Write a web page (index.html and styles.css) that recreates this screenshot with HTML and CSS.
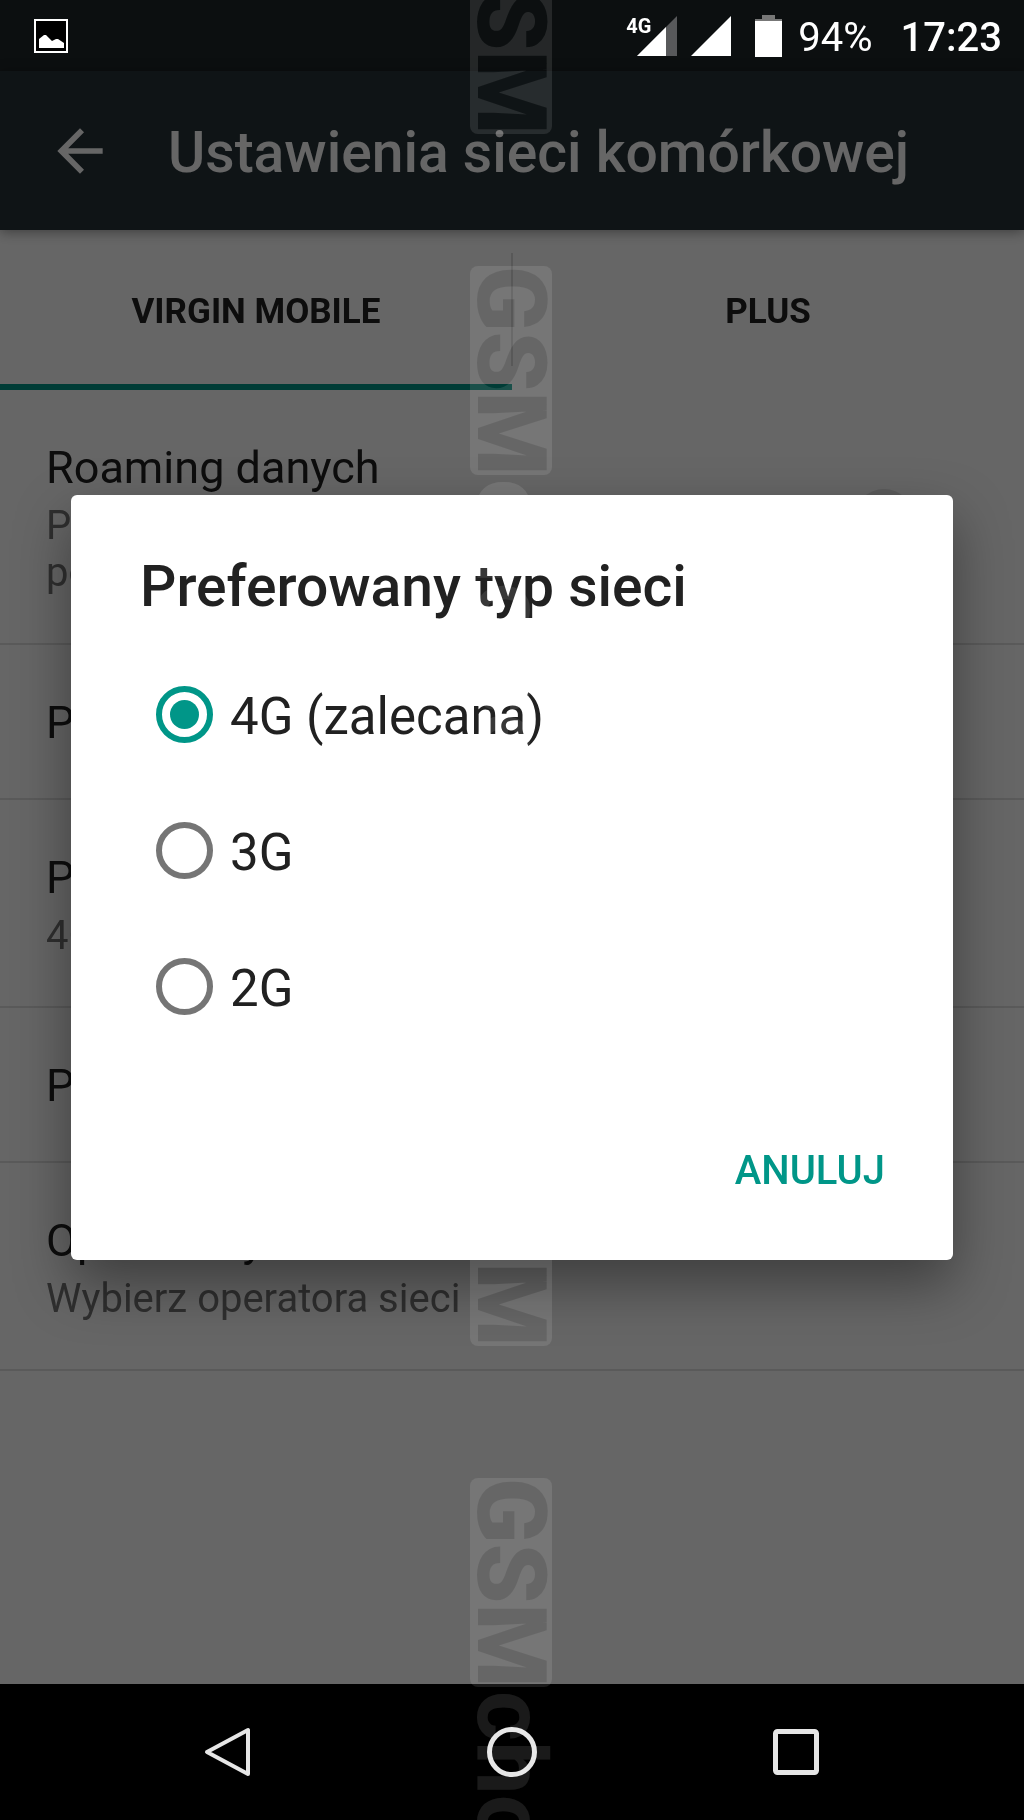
FILE: index.html
```
<!DOCTYPE html>
<html lang="pl">
   <head>
      <meta charset="UTF-8">
      <meta name="viewport" content="width=device-width, initial-scale=1">
      <title>Ustawienia sieci komórkowej</title>
      <link rel="stylesheet" href="styles.css">
   </head>
   <body>
      <div class="phone">
         <div class="status-bar">
            <svg class="picture-icon" width="34" height="34" viewBox="0 0 34 34">
               <rect x="1" y="1" width="32" height="32" fill="#000" stroke="#fff" stroke-width="2"/>
               <path d="M5 29V20L10 16H12L18 22L22 20H24L30 24V29Z" fill="#fff"/>
            </svg>
            <div class="status-right">
               <div class="signal">
                  <span class="signal-type">4G</span>
                  <svg width="40" height="40" viewBox="0 0 40 40">
                     <path d="M0 40L40 0V40Z" fill="#58595b"/>
                     <path d="M0 40L29 11V40Z" fill="#fff"/>
                  </svg>
               </div>
               <svg class="signal-full" width="40" height="40" viewBox="0 0 40 40"><path d="M0 40L40 0V40Z" fill="#fff"/></svg>
               <svg class="battery" width="27" height="42" viewBox="0 0 27 42">
                  <path d="M7 0H20V4H27V7H0V4H7Z" fill="#777"/>
                  <path d="M0 6H27V42H0Z" fill="#fff"/>
               </svg>
               <span class="percent">94%</span>
               <span class="clock">17:23</span>
            </div>
         </div>

         <div class="screen">
            <header class="toolbar">
               <button class="back" aria-label="Wstecz">
                  <svg width="68" height="68" viewBox="0 0 24 24"><path d="M20 11H7.83l5.59-5.59L12 4l-8 8 8 8 1.41-1.41L7.83 13H20v-2z" fill="#fff"/></svg>
               </button>
               <h1>Ustawienia sieci komórkowej</h1>
            </header>
            <nav class="tabs">
               <a class="tab active" href="#virgin">VIRGIN MOBILE</a>
               <a class="tab" href="#plus">PLUS</a>
            </nav>
            <ul class="settings">
               <li class="row">
                  <label class="row-text" for="roaming">
                     <span class="row-title">Roaming danych</span>
                     <span class="row-sub">Połącz z usługami transmisji danych podczas roamingu</span>
                  </label>
                  <input class="switch" type="checkbox" id="roaming">
               </li>
               <li class="row single"><span class="row-title">Pakiet danych</span></li>
               <li class="row">
                  <div class="row-text">
                     <span class="row-title">Preferowany typ sieci</span>
                     <span class="row-sub">4G (zalecana)</span>
                  </div>
               </li>
               <li class="row single"><span class="row-title">Punkty dostępu</span></li>
               <li class="row">
                  <div class="row-text">
                     <span class="row-title">Operatorzy</span>
                     <span class="row-sub">Wybierz operatora sieci</span>
                  </div>
               </li>
            </ul>

            <div class="scrim">
               <form class="dialog" role="dialog" aria-labelledby="dialog-title">
                  <h2 id="dialog-title">Preferowany typ sieci</h2>
                  <label class="option"><input type="radio" name="network" checked><span>4G (zalecana)</span></label>
                  <label class="option"><input type="radio" name="network"><span>3G</span></label>
                  <label class="option"><input type="radio" name="network"><span>2G</span></label>
                  <div class="actions"><button type="button" class="cancel">ANULUJ</button></div>
               </form>
            </div>
         </div>

         <div class="nav-bar">
            <button aria-label="Wstecz">
               <svg width="50" height="54" viewBox="0 0 50 54"><path d="M45 5V49L4 27Z" fill="none" stroke="#e6e6e6" stroke-width="4" stroke-linejoin="round"/></svg>
            </button>
            <button aria-label="Ekran główny">
               <svg width="50" height="50" viewBox="0 0 50 50"><circle cx="25" cy="25" r="22.5" fill="none" stroke="#e6e6e6" stroke-width="5"/></svg>
            </button>
            <button aria-label="Ostatnie aplikacje">
               <svg width="46" height="46" viewBox="0 0 46 46"><rect x="2.5" y="2.5" width="41" height="41" rx="2" fill="none" stroke="#e6e6e6" stroke-width="5"/></svg>
            </button>
         </div>

         <div class="watermark" aria-hidden="true">
            <div class="marks">
               <div class="mark"><b>GSM</b><span>choice</span><b>GSM</b></div>
               <div class="mark"><b>GSM</b><span>choice</span><b>GSM</b></div>
               <div class="mark"><b>GSM</b><span>choice</span><b>GSM</b></div>
            </div>
         </div>
      </div>
   </body>
</html>
```
FILE: styles.css
```
* {
box-sizing: border-box;
}
body {
margin: 0;
background-color: #000;
font-family: Roboto, sans-serif;
color: #212121;
}
button {
border: 0;
padding: 0;
background: none;
font-family: inherit;
cursor: pointer;
}
svg {
display: block;
}
.phone {
position: relative;
display: flex;
flex-direction: column;
min-height: 100vh;
}

/* status bar */
.status-bar {
display: flex;
align-items: center;
justify-content: space-between;
height: 71px;
padding: 0 22px 0 34px;
background-color: #0c0f10;
color: #fff;
font-size: 40px;
}
.status-right {
display: flex;
align-items: center;
}
.percent, .clock {
padding-top: 4px;
}
.signal {
position: relative;
}
.signal-type {
position: absolute;
top: 0;
left: -11px;
font-size: 20px;
line-height: 20px;
font-weight: 700;
}
.signal-full {
margin-left: 14px;
}
.battery {
margin: 0 16px 0 24px;
}
.clock {
margin-left: 28px;
font-weight: 500;
}

/* settings screen */
.screen {
position: relative;
flex: 1;
background-color: #fff;
}
.toolbar {
position: relative;
display: flex;
align-items: center;
gap: 54px;
height: 159px;
padding-left: 46px;
background-color: #263238;
box-shadow: 0 2px 12px rgba(0,0,0,.4);
color: #fff;
}
.toolbar h1 {
margin: 0;
padding-top: 4px;
font-size: 57px;
font-weight: 500;
}
.tabs {
display: flex;
height: 160px;
}
.tab {
position: relative;
flex: 1;
display: flex;
align-items: center;
justify-content: center;
padding-top: 2px;
border-bottom: 6px solid transparent;
border-top: 6px solid transparent;
color: #212121;
font-size: 35px;
font-weight: 700;
text-decoration: none;
}
.tab.active {
border-bottom-color: #009688;
}
.tab + .tab:before {
content: "";
position: absolute;
left: -1px;
top: 17px;
bottom: 18px;
width: 2px;
background-color: #dcdcdc;
}
.settings {
margin: 0;
padding: 0;
list-style: none;
}
.row {
display: flex;
align-items: center;
justify-content: space-between;
gap: 40px;
padding: 51px 46px 47px;
border-bottom: 2px solid #e0e0e0;
}
.row.single {
padding: 51px 46px 49px;
}
.row-text {
display: flex;
flex-direction: column;
gap: 8px;
max-width: 720px;
}
.row-title {
font-size: 45px;
line-height: 53px;
}
.row-sub {
color: #757575;
font-size: 40px;
line-height: 47px;
}
.switch {
appearance: none;
flex: none;
width: 60px;
height: 60px;
margin: 0 64px 0 0;
border-radius: 50%;
background-color: #e4e4e4;
}

/* dialog */
.scrim {
position: absolute;
top: 0;
right: 0;
bottom: 0;
left: 0;
display: flex;
align-items: center;
padding: 0 71px;
background-color: rgba(0,0,0,.6);
}
.dialog {
flex: 1;
padding: 58px 68px 40px 69px;
border-radius: 6px;
background-color: #fff;
box-shadow: 0 24px 56px rgba(0,0,0,.4);
}
.dialog h2 {
margin: 0 0 26px;
font-size: 57px;
line-height: 67px;
font-weight: 500;
}
.option {
display: flex;
align-items: center;
gap: 17px;
height: 136px;
padding-left: 16px;
font-size: 51px;
}
.option span {
padding-top: 4px;
}
.option input {
appearance: none;
display: grid;
place-items: center;
width: 57px;
height: 57px;
margin: 0;
border: 6px solid #757575;
border-radius: 50%;
}
.option input:checked {
border-color: #009688;
}
.option input:checked:before {
content: "";
width: 29px;
height: 29px;
border-radius: 50%;
background-color: #009688;
}
.actions {
display: flex;
justify-content: flex-end;
padding-top: 64px;
}
.cancel {
height: 102px;
padding-top: 2px;
color: #009688;
font-size: 40px;
font-weight: 500;
}

/* navigation bar */
.nav-bar {
display: grid;
grid-template-columns: repeat(3, 1fr);
align-items: center;
height: 136px;
padding: 0 86px;
background-color: #000;
}
.nav-bar button {
display: flex;
justify-content: center;
}

/* watermark, black letters vanish under the screen blend */
.watermark {
position: absolute;
top: 0;
bottom: 0;
left: 50%;
width: 82px;
margin-left: -42px;
overflow: hidden;
mix-blend-mode: screen;
opacity: .1;
pointer-events: none;
}
.marks {
display: flex;
flex-direction: column;
gap: 132px;
margin-top: -946px;
}
.mark {
display: flex;
flex-direction: column;
height: 1080px;
font-size: 96px;
line-height: 82px;
font-weight: 700;
color: #fff;
}
.mark b, .mark span {
writing-mode: vertical-rl;
width: 82px;
}
.mark b {
height: 209px;
border-radius: 8px;
background-color: #fff;
color: #000;
text-align: center;
}
.mark span {
flex: 1;
padding-top: 4px;
}
```
